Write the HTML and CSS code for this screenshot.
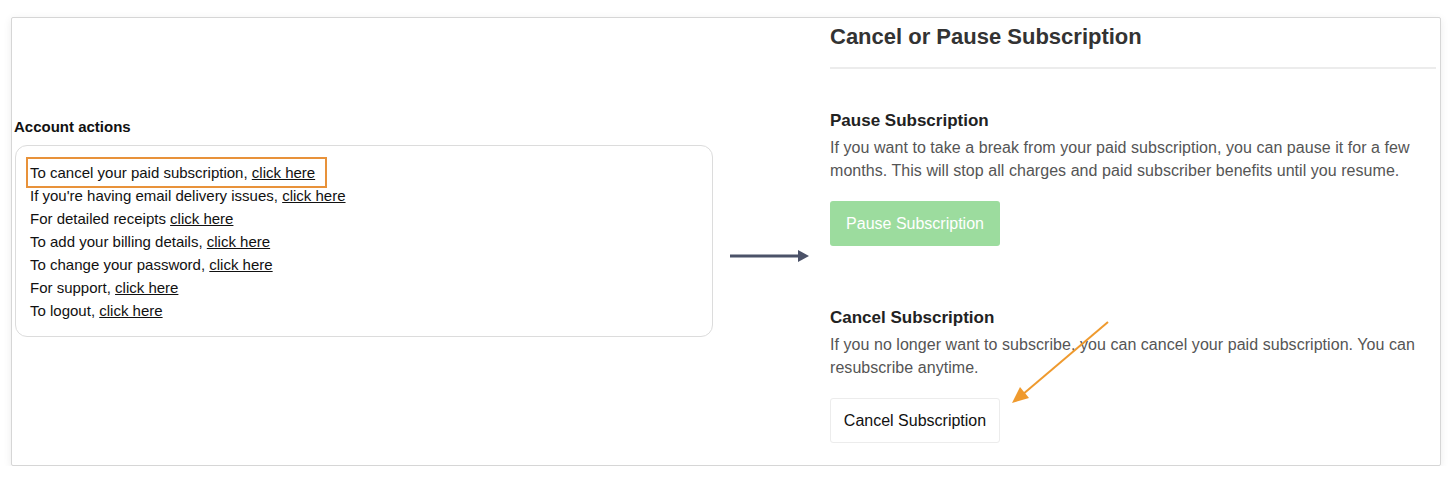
FILE: index.html
```html
<!DOCTYPE html>
<html lang="en">
<head>
  <meta charset="UTF-8">
  <title>Cancel or Pause Subscription</title>
  <link rel="stylesheet" href="styles.css">
</head>
<body>
  <div class="frame">
    <div class="account">
      <h3>Account actions</h3>
      <div class="actions">
        <p class="highlight">To cancel your paid subscription, <a href="#">click here</a></p>
        <p>If you're having email delivery issues, <a href="#">click here</a></p>
        <p>For detailed receipts <a href="#">click here</a></p>
        <p>To add your billing details, <a href="#">click here</a></p>
        <p>To change your password, <a href="#">click here</a></p>
        <p>For support, <a href="#">click here</a></p>
        <p>To logout, <a href="#">click here</a></p>
      </div>
    </div>

    <div class="pointer">
      <svg width="80" height="20" viewBox="0 0 80 20">
        <line x1="0" y1="10" x2="70" y2="10" stroke="#4b5268" stroke-width="3"/>
        <polygon points="68,4 79,10 68,16" fill="#4b5268"/>
      </svg>
    </div>

    <div class="manage">
      <h1>Cancel or Pause Subscription</h1>
      <section class="pause">
        <h2>Pause Subscription</h2>
        <p>If you want to take a break from your paid subscription, you can pause it for a few months. This will stop all charges and paid subscriber benefits until you resume.</p>
        <button class="btn btn-pause">Pause Subscription</button>
      </section>
      <section class="cancel">
        <h2>Cancel Subscription</h2>
        <p>If you no longer want to subscribe, you can cancel your paid subscription. You can resubscribe anytime.</p>
        <button class="btn btn-cancel">Cancel Subscription</button>
        <svg class="callout" width="100" height="84" viewBox="0 0 100 84">
          <line x1="98" y1="1" x2="12" y2="74" stroke="#ef9a2e" stroke-width="2"/>
          <polygon points="2,82 10,66 19,77" fill="#ef9a2e"/>
        </svg>
      </section>
    </div>
  </div>
</body>
</html>
```

FILE: styles.css
```css
* {
  box-sizing: border-box;
}
body {
  margin: 0;
  background: #fff;
  font-family: "Liberation Sans", Arial, sans-serif;
}
.frame {
  display: flex;
  width: 1430px;
  height: 449px;
  margin: 17px 0 0 11px;
  border: 1px solid #d6d6d6;
  border-radius: 2px;
  box-shadow: 0 2px 8px rgba(0, 0, 0, 0.08);
  background: #fff;
}
.account {
  flex: none;
  width: 704px;
  padding: 100px 0 0 2px;
}
.account h3 {
  margin: 0 0 9px 0;
  font-size: 15px;
  font-weight: bold;
  color: #111;
  line-height: 18px;
}
.actions {
  margin: 0 3px 0 1px;
  height: 192px;
  padding: 15px 0 0 14px;
  border: 1px solid #dcdcdc;
  border-radius: 12px;
}
.actions p {
  margin: 0;
  font-size: 15px;
  line-height: 23px;
  color: #111;
  width: fit-content;
}
.actions p.highlight {
  padding-right: 8px;
  outline: 2px solid #e8923a;
  outline-offset: 2px;
}
.actions a {
  color: #111;
}
.pointer {
  flex: none;
  width: 114px;
  padding-top: 228px;
  padding-left: 14px;
}
.manage {
  flex: none;
  width: 606px;
  position: relative;
}
.manage h1 {
  margin: 0;
  padding: 4px 0 15px 0;
  font-size: 22px;
  line-height: 30px;
  color: #333;
  border-bottom: 2px solid #ececec;
}
.manage h2 {
  margin: 0;
  font-size: 17px;
  line-height: 22px;
  color: #222;
}
.manage p {
  margin: 4px 0 0 0;
  font-size: 16px;
  line-height: 23px;
  color: #555;
  letter-spacing: 0.05px;
}
.pause {
  padding-top: 41px;
}
.cancel {
  padding-top: 61px;
  position: relative;
}
.btn {
  display: block;
  width: 170px;
  height: 45px;
  margin-top: 19px;
  border-radius: 3px;
  font-family: "Liberation Sans", Arial, sans-serif;
  font-size: 16px;
}
.btn-pause {
  background: #9cdc9e;
  color: #fff;
  border: none;
}
.btn-cancel {
  background: #fff;
  color: #111;
  border: 1px solid #ececec;
}
.callout {
  position: absolute;
  left: 180px;
  top: 75px;
}
```
